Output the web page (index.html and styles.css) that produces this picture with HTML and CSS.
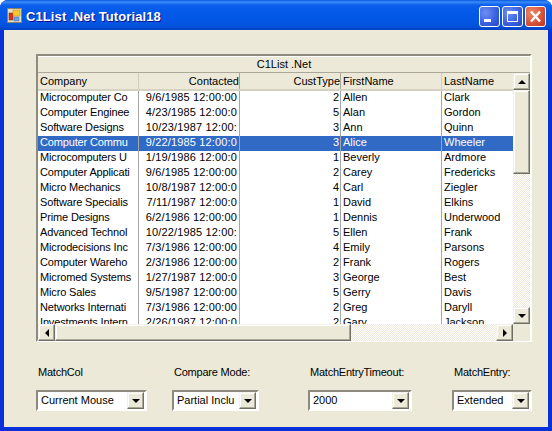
FILE: index.html
```html
<!DOCTYPE html>
<html lang="en">
<head>
    <meta charset="UTF-8">
    <meta name="viewport" content="width=device-width, initial-scale=1.0">
    <title>C1List .Net Tutorial18</title>
    <link rel="stylesheet" href="styles.css">
</head>
<body>
    <div class="window">
        <div class="titlebar">
            <svg class="app-icon" width="16" height="16" viewBox="0 0 16 16">
                <rect x="0.5" y="0.5" width="14" height="14" fill="#e8e0c0" stroke="#8a8468"/>
                <rect x="2" y="5" width="4" height="7" fill="#d83020" stroke="#802018" stroke-width="0.5"/>
                <rect x="6" y="2" width="7" height="6" fill="#f8c830" stroke="#b08818" stroke-width="0.5"/>
                <rect x="7" y="9" width="5" height="4" fill="#70a0e0" stroke="#4070b0" stroke-width="0.5"/>
            </svg>
            <span class="title-text">C1List .Net Tutorial18</span>
            <div class="title-buttons">
                <div class="title-btn">
                    <svg width="19" height="19" viewBox="0 0 19 19"><rect x="4" y="12" width="7" height="3" fill="#fff"/></svg>
                </div>
                <div class="title-btn">
                    <svg width="19" height="19" viewBox="0 0 19 19"><path d="M4.5 6.5h10v8h-10z" fill="none" stroke="#fff"/><rect x="4" y="4" width="11" height="2.5" fill="#fff"/></svg>
                </div>
                <div class="title-btn close">
                    <svg width="19" height="19" viewBox="0 0 19 19"><path d="M5 4.5l9 10M14 4.5l-9 10" stroke="#fff" stroke-width="2.4" fill="none"/></svg>
                </div>
            </div>
        </div>

        <div class="client">
            <div class="list">
                <div class="list-caption">C1List .Net</div>
                <div class="list-main">
                    <div class="list-view">
                        <div class="list-header">
                            <div class="col col-left">Company</div>
                            <div class="col col-right">Contacted</div>
                            <div class="col col-right">CustType</div>
                            <div class="col col-left">FirstName</div>
                            <div class="col col-left col-last">LastName</div>
                        </div>
                        <div class="list-body">
                            <div class="row"><div class="cell cell-company">Microcomputer Co</div><div class="cell cell-date">9/6/1985 12:00:00</div><div class="cell cell-right">2</div><div class="cell">Allen</div><div class="cell cell-last">Clark</div></div>
                            <div class="row"><div class="cell cell-company">Computer Enginee</div><div class="cell cell-date">4/23/1985 12:00:0</div><div class="cell cell-right">5</div><div class="cell">Alan</div><div class="cell cell-last">Gordon</div></div>
                            <div class="row"><div class="cell cell-company">Software Designs</div><div class="cell cell-date">10/23/1987 12:00:</div><div class="cell cell-right">3</div><div class="cell">Ann</div><div class="cell cell-last">Quinn</div></div>
                            <div class="row selected"><div class="cell cell-company">Computer Commu</div><div class="cell cell-date">9/22/1985 12:00:0</div><div class="cell cell-right">3</div><div class="cell">Alice</div><div class="cell cell-last">Wheeler</div></div>
                            <div class="row"><div class="cell cell-company">Microcomputers U</div><div class="cell cell-date">1/19/1986 12:00:0</div><div class="cell cell-right">1</div><div class="cell">Beverly</div><div class="cell cell-last">Ardmore</div></div>
                            <div class="row"><div class="cell cell-company">Computer Applicati</div><div class="cell cell-date">9/6/1985 12:00:00</div><div class="cell cell-right">2</div><div class="cell">Carey</div><div class="cell cell-last">Fredericks</div></div>
                            <div class="row"><div class="cell cell-company">Micro Mechanics</div><div class="cell cell-date">10/8/1987 12:00:0</div><div class="cell cell-right">4</div><div class="cell">Carl</div><div class="cell cell-last">Ziegler</div></div>
                            <div class="row"><div class="cell cell-company">Software Specialis</div><div class="cell cell-date">7/11/1987 12:00:0</div><div class="cell cell-right">1</div><div class="cell">David</div><div class="cell cell-last">Elkins</div></div>
                            <div class="row"><div class="cell cell-company">Prime Designs</div><div class="cell cell-date">6/2/1986 12:00:00</div><div class="cell cell-right">1</div><div class="cell">Dennis</div><div class="cell cell-last">Underwood</div></div>
                            <div class="row"><div class="cell cell-company">Advanced Technol</div><div class="cell cell-date">10/22/1985 12:00:</div><div class="cell cell-right">5</div><div class="cell">Ellen</div><div class="cell cell-last">Frank</div></div>
                            <div class="row"><div class="cell cell-company">Microdecisions Inc</div><div class="cell cell-date">7/3/1986 12:00:00</div><div class="cell cell-right">4</div><div class="cell">Emily</div><div class="cell cell-last">Parsons</div></div>
                            <div class="row"><div class="cell cell-company">Computer Wareho</div><div class="cell cell-date">2/3/1986 12:00:00</div><div class="cell cell-right">2</div><div class="cell">Frank</div><div class="cell cell-last">Rogers</div></div>
                            <div class="row"><div class="cell cell-company">Micromed Systems</div><div class="cell cell-date">1/27/1987 12:00:0</div><div class="cell cell-right">3</div><div class="cell">George</div><div class="cell cell-last">Best</div></div>
                            <div class="row"><div class="cell cell-company">Micro Sales</div><div class="cell cell-date">9/5/1987 12:00:00</div><div class="cell cell-right">5</div><div class="cell">Gerry</div><div class="cell cell-last">Davis</div></div>
                            <div class="row"><div class="cell cell-company">Networks Internati</div><div class="cell cell-date">7/3/1986 12:00:00</div><div class="cell cell-right">2</div><div class="cell">Greg</div><div class="cell cell-last">Daryll</div></div>
                            <div class="row"><div class="cell cell-company">Investments Intern</div><div class="cell cell-date">2/26/1987 12:00:0</div><div class="cell cell-right">2</div><div class="cell">Gary</div><div class="cell cell-last">Jackson</div></div>
                        </div>
                    </div>
                    <div class="vscroll">
                        <div class="scroll-btn"><span class="arrow-up"></span></div>
                        <div class="vscroll-thumb"></div>
                        <div class="scroll-track"></div>
                        <div class="scroll-btn"><span class="arrow-down"></span></div>
                    </div>
                </div>
                <div class="hscroll">
                    <div class="scroll-btn"><span class="arrow-left"></span></div>
                    <div class="hscroll-thumb"></div>
                    <div class="scroll-track"></div>
                    <div class="scroll-btn"><span class="arrow-right"></span></div>
                    <div class="scroll-corner"></div>
                </div>
            </div>

            <div class="controls">
                <div class="field field-matchcol">
                    <label>MatchCol</label>
                    <div class="combo"><span class="combo-text">Current Mouse</span><div class="scroll-btn"><span class="arrow-down"></span></div></div>
                </div>
                <div class="field field-compare">
                    <label>Compare Mode:</label>
                    <div class="combo"><span class="combo-text">Partial Inclu</span><div class="scroll-btn"><span class="arrow-down"></span></div></div>
                </div>
                <div class="field field-timeout">
                    <label>MatchEntryTimeout:</label>
                    <div class="combo"><span class="combo-text">2000</span><div class="scroll-btn"><span class="arrow-down"></span></div></div>
                </div>
                <div class="field field-entry">
                    <label>MatchEntry:</label>
                    <div class="combo"><span class="combo-text">Extended</span><div class="scroll-btn"><span class="arrow-down"></span></div></div>
                </div>
            </div>
        </div>
    </div>
</body>
</html>
```

FILE: styles.css
```css
html, body {
    margin: 0;
    padding: 0;
    background: #fff;
}

body {
    font-family: "Liberation Sans", Arial, sans-serif;
    font-size: 11px;
    color: #000;
}

.window {
    width: 552px;
    height: 431px;
    box-sizing: border-box;
    display: flex;
    flex-direction: column;
    border-radius: 8px 8px 0 0;
    overflow: hidden;
    background: #0831d9;
}

.titlebar {
    height: 30px;
    flex: none;
    display: flex;
    align-items: center;
    padding: 0 6px 0 7px;
    box-sizing: border-box;
    background: linear-gradient(to bottom, #0a58e0 0, #3b8cf8 2px, #0a60ec 5px, #0358e8 14px, #0356e4 22px, #0350d8 27px, #0340c0 30px);
}

.app-icon {
    flex: none;
    margin-right: 3px;
    margin-top: 2px;
}

.title-text {
    color: #fff;
    font-weight: bold;
    font-size: 13px;
    letter-spacing: 0.1px;
    text-shadow: 1px 1px 0 #0f1089;
    white-space: nowrap;
    flex: 1;
    padding-top: 3px;
}

.title-buttons {
    display: flex;
    gap: 2px;
    margin-top: 3px;
}

.title-btn {
    width: 21px;
    height: 21px;
    box-sizing: border-box;
    border: 1px solid #fff;
    border-radius: 3px;
    background: radial-gradient(circle at 30% 30%, #6f8ff0 0, #3c62e0 55%, #2a46c0 100%);
}

.title-btn svg {
    display: block;
}

.title-btn.close {
    background: radial-gradient(circle at 30% 30%, #ec8a6a 0, #d8553a 55%, #b83418 100%);
}

.client {
    margin: 0 4px 4px;
    flex: 1;
    background: #ece9d8;
    padding: 24px 0 0 32px;
}

/* list control */
.list {
    width: 496px;
    height: 288px;
    box-sizing: border-box;
    border: 2px solid;
    border-color: #8d8b7e #fff #fff #8d8b7e;
    display: flex;
    flex-direction: column;
}

.list-caption {
    flex: none;
    border-bottom: 1px solid #aca899;
    border-top: 1px solid #fff;
    height: 15px;
    line-height: 15px;
    text-align: center;
}

.list-main {
    display: flex;
    height: 251px;
    flex: none;
}

.list-view {
    width: 475px;
    flex: none;
    display: flex;
    flex-direction: column;
}

.list-header {
    display: flex;
    height: 18px;
    flex: none;
    box-sizing: border-box;
    border-bottom: 2px solid #d6d2c2;
    line-height: 16px;
}

.col {
    width: 101px;
    box-sizing: border-box;
    flex: none;
    padding: 0 2px;
    border-right: 1px solid #d0cdbd;
    white-space: nowrap;
}

.col-left {
    text-align: left;
}

.col-right {
    text-align: right;
    padding-right: 0;
    border-right-color: #aca899;
}

.col-last {
    width: 71px;
    border-right: 0;
    padding-left: 2px;
}

.list-body {
    flex: 1;
    overflow: hidden;
    background: #fff;
}

.row {
    display: flex;
    height: 15px;
    line-height: 13px;
}

.row.selected {
    background: #316ac5;
    color: #fff;
}

.cell {
    width: 101px;
    flex: none;
    box-sizing: border-box;
    padding: 0 2px;
    border-right: 1px solid #a6a6a6;
    white-space: nowrap;
    overflow: hidden;
}

.cell-company {
    letter-spacing: -0.15px;
}

.cell-date {
    text-align: right;
    padding-right: 2px;
    letter-spacing: 0.15px;
}

.cell-right {
    text-align: right;
    padding-right: 1px;
}

.cell-last {
    width: 71px;
    border-right: 0;
}

/* scrollbars */
.scroll-btn {
    width: 17px;
    height: 17px;
    box-sizing: border-box;
    flex: none;
    display: flex;
    align-items: center;
    justify-content: center;
    background: #ece9d8;
    border: 1px solid;
    border-color: #f4f2e8 #716f64 #716f64 #f4f2e8;
    box-shadow: inset -1px -1px 0 #aca899, inset 1px 1px 0 #fff;
}

.arrow-up, .arrow-down {
    width: 0;
    height: 0;
    border-left: 4px solid transparent;
    border-right: 4px solid transparent;
}

.arrow-up {
    border-bottom: 4px solid #000;
}

.arrow-down {
    border-top: 4px solid #000;
}

.arrow-left, .arrow-right {
    width: 0;
    height: 0;
    border-top: 4px solid transparent;
    border-bottom: 4px solid transparent;
}

.arrow-left {
    border-right: 4px solid #000;
}

.arrow-right {
    border-left: 4px solid #000;
}

.scroll-track {
    flex: 1;
    background-image: conic-gradient(#fff 25%, #ece9d8 0 50%, #fff 0 75%, #ece9d8 0);
    background-size: 2px 2px;
}

.vscroll {
    width: 17px;
    flex: none;
    display: flex;
    flex-direction: column;
}

.vscroll-thumb {
    height: 84px;
    flex: none;
    box-sizing: border-box;
    background: #ece9d8;
    border: 1px solid;
    border-color: #f4f2e8 #716f64 #716f64 #f4f2e8;
    box-shadow: inset -1px -1px 0 #aca899, inset 1px 1px 0 #fff;
}

.hscroll {
    display: flex;
    height: 17px;
    flex: none;
}

.hscroll-thumb {
    width: 296px;
    flex: none;
    box-sizing: border-box;
    background: #ece9d8;
    border: 1px solid;
    border-color: #f4f2e8 #716f64 #716f64 #f4f2e8;
    box-shadow: inset -1px -1px 0 #aca899, inset 1px 1px 0 #fff;
}

.scroll-corner {
    width: 17px;
    flex: none;
    background: #ece9d8;
}

/* bottom row of combos */
.controls {
    display: flex;
    margin-top: 23px;
}

.field {
    display: flex;
    flex-direction: column;
    flex: none;
}

.field label {
    height: 14px;
    line-height: 14px;
    padding-left: 2px;
    margin-bottom: 11px;
    white-space: nowrap;
    letter-spacing: -0.22px;
}

.field-matchcol {
    width: 111px;
    margin-right: 25px;
}

.field-compare {
    width: 87px;
    margin-right: 49px;
}

.field-timeout {
    width: 104px;
    margin-right: 40px;
}

.field-entry {
    width: 80px;
}

.combo {
    height: 21px;
    box-sizing: border-box;
    display: flex;
    align-items: center;
    background: #fff;
    border: 2px solid;
    border-color: #8d8b7e #fff #fff #8d8b7e;
    padding-right: 1px;
}

.combo-text {
    flex: 1;
    padding-left: 3px;
    padding-bottom: 1px;
    white-space: nowrap;
    overflow: hidden;
}
```
